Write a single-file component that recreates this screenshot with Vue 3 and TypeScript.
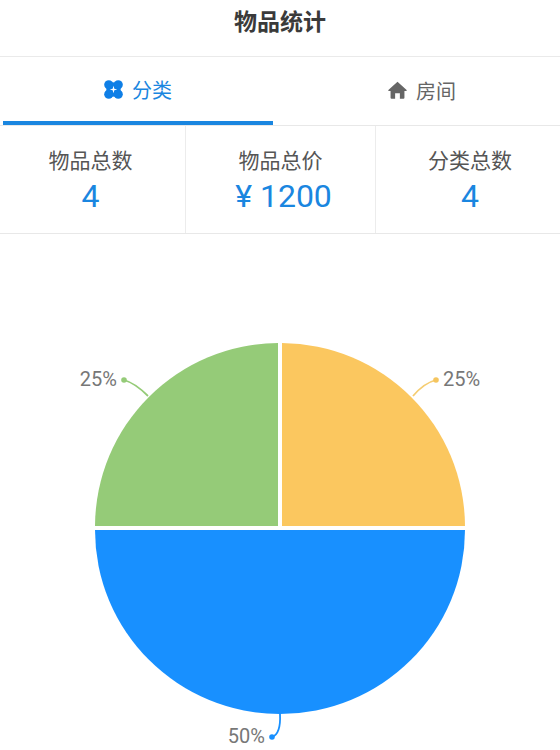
<template>
  <div class="page">
    <header class="title">物品统计</header>

    <nav class="tabs">
      <div
        v-for="tab in tabs"
        :key="tab.key"
        class="tab"
        :class="{ active: tab.key === activeTab }"
        @click="activeTab = tab.key"
      >
        <svg v-if="tab.key === 'category'" class="tab-icon" viewBox="0 0 20 20">
          <circle cx="5" cy="5" r="4.800" />
          <circle cx="15" cy="5" r="4.800" />
          <circle cx="5" cy="15" r="4.800" />
          <circle cx="15" cy="15" r="4.800" />
          <rect x="2.500" y="2.500" width="15" height="15" />
          <path d="M10 6 10.900 9.100 14 10 10.900 10.900 10 14 9.100 10.900 6 10 9.100 9.100Z" fill="#fff" />
        </svg>
        <svg v-else class="tab-icon" viewBox="0 0 20 20">
          <path d="M10 .8.400 9.600c-.4.400-.1 1 .4 1h1.900v7.100c0 .6.400 1 1 1h3.800v-5.800h5v5.800h3.800c.6 0 1-.4 1-1v-7.100h1.900c.5 0 .8-.6.400-1L10 .8Z" />
        </svg>
        <span>{{ tab.label }}</span>
      </div>
    </nav>

    <section class="stats">
      <div v-for="stat in stats" :key="stat.label" class="stat">
        <div class="stat-label">{{ stat.label }}</div>
        <div class="stat-value" :class="{ price: stat.isPrice }">{{ stat.value }}</div>
      </div>
    </section>

    <section class="chart">
      <svg width="560" height="516" viewBox="0 234 560 516">
        <path d="M278 342A184 184 0 0 0 95 525H278Z" fill="#95cb78" />
        <path d="M282 342A184 184 0 0 1 465 525H282Z" fill="#fbc75f" />
        <path d="M95 529H465A185 184 0 0 1 95 529Z" fill="#1890ff" />

        <path d="M148 395Q135 382 124 379" class="leader" stroke="#95cb78" />
        <circle cx="124" cy="379" r="2.800" fill="#95cb78" />
        <text x="117" y="384.500" text-anchor="end" class="pct">25%</text>

        <path d="M413 395Q424 382 436 379" class="leader" stroke="#f5cd72" />
        <circle cx="436" cy="379" r="2.800" fill="#f5c55f" />
        <text x="443" y="384.500" class="pct">25%</text>

        <path d="M280 713Q281 733 272 736" class="leader" stroke="#1890ff" />
        <circle cx="272" cy="736" r="2.800" fill="#1890ff" />
        <text x="265" y="742" text-anchor="end" class="pct">50%</text>
      </svg>
    </section>
  </div>
</template>

<script setup lang="ts">
import { ref } from 'vue';

const activeTab = ref('category');

const tabs = [
  { key: 'category', label: '分类' },
  { key: 'room', label: '房间' },
];

const stats = [
  { label: '物品总数', value: '4', isPrice: false },
  { label: '物品总价', value: '¥ 1200', isPrice: true },
  { label: '分类总数', value: '4', isPrice: false },
];
</script>

<style>
body {
  background: #fff;
}
</style>

<style scoped>
.page {
  width: 560px;
  height: 750px;
  overflow: hidden;
  background: #fff;
  font-family: "Noto Sans CJK SC", "Noto Sans", sans-serif;
}

.title {
  height: 40px;
  padding-bottom: 16px;
  line-height: 40px;
  text-align: center;
  font-size: 23px;
  font-weight: 700;
  color: #3a3a3a;
  border-bottom: 1px solid #eaeaea;
}

.tabs {
  display: flex;
  height: 68px;
  border-bottom: 1px solid #e8e8e8;
}

.tab {
  flex: 1;
  margin: 0 3px;
  display: flex;
  align-items: center;
  justify-content: center;
  gap: 9px;
  height: 68px;
  box-sizing: border-box;
  padding-bottom: 2px;
  font-size: 20px;
  color: #666;
  cursor: pointer;
}

.tab + .tab {
  margin-left: 11px;
}

.tab.active {
  color: #1a86e0;
  border-bottom: 4px solid #1a86e0;
  padding-bottom: 0;
}

.tab-icon {
  width: 19px;
  height: 19px;
  fill: #666;
}

.tab.active .tab-icon {
  fill: #0f7fe6;
}

.stats {
  display: grid;
  grid-template-columns: 185px 190px 185px;
  height: 107px;
  border-bottom: 1px solid #e8e8e8;
}

.stat {
  display: flex;
  flex-direction: column;
  align-items: center;
  padding-top: 19px;
  border-left: 1px solid #ececec;
}

.stat:first-child {
  border-left: 0;
  padding-right: 4px;
}

.stat:last-child {
  padding-left: 4px;
}

.stat-label {
  font-size: 21px;
  line-height: 29px;
  color: #555;
}

.stat-value {
  margin-top: 2px;
  font-family: Roboto, "Noto Sans", sans-serif;
  font-size: 32px;
  line-height: 40px;
  color: #1a86e0;
}

.stat-value.price {
  margin-left: 6px;
}

.chart {
  padding-top: 1px;
}

.chart svg {
  display: block;
}

.leader {
  fill: none;
  stroke-width: 1.800;
}

.pct {
  font-family: Roboto, "Noto Sans", sans-serif;
  font-size: 20px;
  fill: #777;
}
</style>
